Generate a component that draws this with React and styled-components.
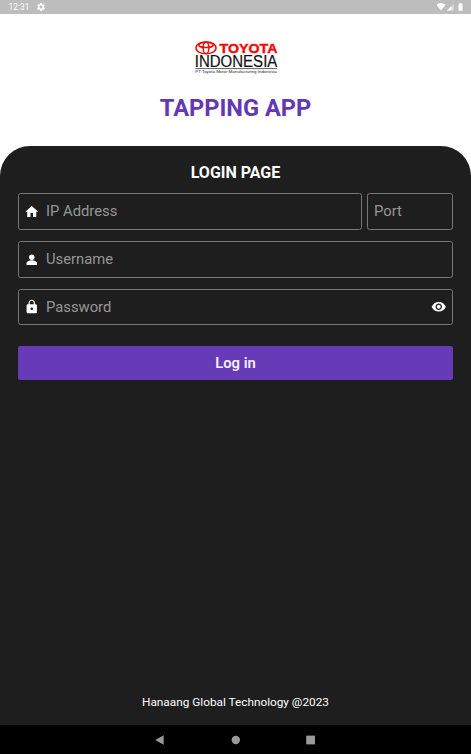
import React from "react";
import styled, { createGlobalStyle } from "styled-components";
import { MdHome, MdLock, MdVisibility, MdSettings } from "react-icons/md";

const GlobalStyle = createGlobalStyle`
  *, *::before, *::after { box-sizing: border-box; }
  body { margin: 0; background: #fff; font-family: Roboto, sans-serif; }
`;

const Screen = styled.div`
  width: 100%;
  height: 100vh;
  display: flex;
  flex-direction: column;
  overflow: hidden;
  background: #fff;
`;

const StatusBar = styled.div`
  flex: none;
  height: 14px;
  padding: 0 7.5px 0 8.5px;
  display: flex;
  align-items: center;
  background: #bdbdbd;
  color: #fff;
  svg { display: block; }
`;

const Clock = styled.span`
  font-size: 8.2px;
  line-height: 14px;
  letter-spacing: 0.1px;
  margin-right: 7px;
`;

const Signals = styled.div`
  margin-left: auto;
  display: flex;
  align-items: center;
`;

const Header = styled.header`
  flex: none;
  height: 131.5px;
  display: flex;
  flex-direction: column;
  align-items: center;
  padding-top: 26px;
`;

const Logo = styled.svg`
  display: block;
  width: 84px;
  height: 36px;
  overflow: visible;
`;

const Title = styled.h1`
  margin: 18px 0 0;
  font-size: 23.6px;
  line-height: 28px;
  font-weight: 700;
  color: #6338b3;
  white-space: nowrap;
`;

const Panel = styled.main`
  flex: 1;
  min-height: 0;
  display: flex;
  flex-direction: column;
  padding: 17px 18px 15px;
  border-radius: 30px 30px 0 0;
  background: #1e1e1e;
  color: #fff;
`;

const PanelTitle = styled.h2`
  margin: 0 0 10.5px;
  font-size: 16px;
  line-height: 20px;
  font-weight: 700;
  text-align: center;
`;

const Form = styled.div`
  display: flex;
  flex-direction: column;
  gap: 11px;
`;

const Row = styled.div`
  display: flex;
  gap: 5.5px;
`;

const Field = styled.label`
  flex: ${(p) => (p.$width ? `0 0 ${p.$width}` : "1")};
  min-width: 0;
  height: ${(p) => p.$height || "37px"};
  padding: 0 5.5px 0 ${(p) => (p.$width ? "6px" : "5.2px")};
  display: flex;
  align-items: center;
  gap: 6.3px;
  border: 1px solid #777;
  border-radius: 2.5px;
  svg { flex: none; display: block; }
`;

const Input = styled.input`
  flex: 1;
  min-width: 0;
  padding: 0;
  border: 0;
  outline: 0;
  background: transparent;
  color: #fff;
  font: 400 14.8px/19px Roboto, sans-serif;
  &::placeholder { color: #969696; opacity: 1; }
`;

const LoginButton = styled.button`
  height: 34.5px;
  margin-top: 20.5px;
  padding: 0;
  border: 0;
  border-radius: 2px;
  background: #673ab7;
  color: #f6f0ff;
  font: 600 14.8px/20px Roboto, sans-serif;
`;

const Footer = styled.footer`
  margin-top: auto;
  font-size: 11.8px;
  line-height: 16px;
  text-align: center;
`;

const NavBar = styled.nav`
  flex: none;
  height: 28.6px;
  display: flex;
  align-items: center;
  justify-content: center;
  gap: 65.5px;
  background: #000;
  svg { display: block; }
`;

function ToyotaLogo() {
  return (
    <Logo viewBox="0 0 84 36" role="img" aria-label="Toyota Indonesia">
      <g fill="none" stroke="#f00b0b" strokeWidth="1.5">
        <ellipse cx="12" cy="7.9" rx="10" ry="5.9" />
        <ellipse cx="12" cy="4.9" rx="7.2" ry="2.6" />
        <ellipse cx="12" cy="7.9" rx="2.9" ry="5.7" />
      </g>
      <text x="25.5" y="12.5" textLength="58" lengthAdjust="spacingAndGlyphs" fontFamily="Liberation Sans, sans-serif" fontSize="12.8" fontWeight="700" fill="#f00b0b" stroke="#f00b0b" strokeWidth="0.4">TOYOTA</text>
      <text x="0.8" y="27" textLength="82.5" lengthAdjust="spacingAndGlyphs" fontFamily="Liberation Sans, sans-serif" fontSize="15.6" fill="#111" stroke="#111" strokeWidth="0.2">INDONESIA</text>
      <path d="M1.3 28.6H83" stroke="#333" strokeWidth="0.8" />
      <text x="1.3" y="33.4" textLength="81.5" lengthAdjust="spacingAndGlyphs" fontFamily="Liberation Sans, sans-serif" fontSize="4.3" fill="#222">PT Toyota Motor Manufacturing Indonesia</text>
    </Logo>
  );
}

function PersonIcon() {
  return (
    <svg width="15.5" height="15.5" viewBox="0 0 24 24" fill="currentColor">
      <circle cx="12" cy="8" r="4.2" />
      <path d="M4 20v-2.6c0-3.1 4.5-4.6 8-4.6s8 1.5 8 4.6V20Z" />
    </svg>
  );
}

export default function App() {
  return (
    <>
      <GlobalStyle />
      <Screen>
        <StatusBar>
          <Clock>12:31</Clock>
          <MdSettings size={10} />
          <Signals>
            <svg width="27" height="10" viewBox="0 0 27 10" fill="#fff">
              <path d="M-.5 2.8Q4-.6 8.5 2.8L4 8.6Z" />
              <path d="M10 8.6 17 1.6V8.6Z" opacity=".4" />
              <path d="M10 8.6 14.5 4.1V8.6Z" />
              <path d="M21.5 1.9h1V1h2v.9h1v6.9h-4Z" />
            </svg>
          </Signals>
        </StatusBar>
        <Header>
          <ToyotaLogo />
          <Title>TAPPING APP</Title>
        </Header>
        <Panel>
          <PanelTitle>LOGIN PAGE</PanelTitle>
          <Form>
            <Row>
              <Field>
                <MdHome size={15.5} />
                <Input placeholder="IP Address" />
              </Field>
              <Field $width="86px">
                <Input placeholder="Port" />
              </Field>
            </Row>
            <Row>
              <Field>
                <PersonIcon />
                <Input placeholder="Username" />
              </Field>
            </Row>
            <Row>
              <Field $height="36.4px">
                <MdLock size={15.5} />
                <Input type="password" placeholder="Password" />
                <MdVisibility size={15.5} />
              </Field>
            </Row>
          </Form>
          <LoginButton>Log in</LoginButton>
          <Footer>Hanaang Global Technology @2023</Footer>
        </Panel>
        <NavBar>
          <svg width="10" height="10" viewBox="0 0 10 10" fill="#999"><path d="M.2 5 8.7.2v9.6Z" /></svg>
          <svg width="10" height="10" viewBox="0 0 10 10" fill="#999"><circle cx="4.8" cy="5" r="4.2" /></svg>
          <svg width="10" height="10" viewBox="0 0 10 10" fill="#999"><path d="M.2.6h8.8v8.8H.2Z" /></svg>
        </NavBar>
      </Screen>
    </>
  );
}
